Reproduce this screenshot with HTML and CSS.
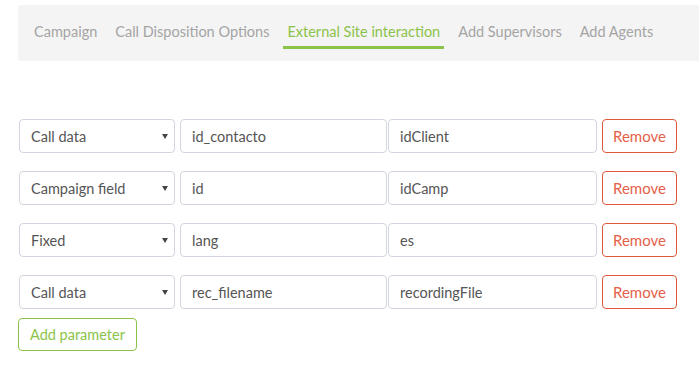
FILE: index.html
```html
<!DOCTYPE html>
<html lang="en">
<head>
    <meta charset="UTF-8">
    <meta name="viewport" content="width=device-width, initial-scale=1.0">
    <title>External Site interaction</title>
    <link rel="stylesheet" href="styles.css">
</head>
<body>
    <div class="page">
        <nav class="tabs">
            <a class="tab" href="#">Campaign</a>
            <a class="tab" href="#">Call Disposition Options</a>
            <a class="tab active" href="#">External Site interaction</a>
            <a class="tab" href="#">Add Supervisors</a>
            <a class="tab" href="#">Add Agents</a>
        </nav>

        <form class="params">
            <div class="param-row">
                <span class="select-wrap">
                    <select class="field select">
                        <option>Call data</option>
                        <option>Campaign field</option>
                        <option>Fixed</option>
                    </select>
                </span>
                <input class="field name" type="text" value="id_contacto">
                <input class="field value" type="text" value="idClient">
                <button type="button" class="btn-remove">Remove</button>
            </div>
            <div class="param-row">
                <span class="select-wrap">
                    <select class="field select">
                        <option>Call data</option>
                        <option selected>Campaign field</option>
                        <option>Fixed</option>
                    </select>
                </span>
                <input class="field name" type="text" value="id">
                <input class="field value" type="text" value="idCamp">
                <button type="button" class="btn-remove">Remove</button>
            </div>
            <div class="param-row">
                <span class="select-wrap">
                    <select class="field select">
                        <option>Call data</option>
                        <option>Campaign field</option>
                        <option selected>Fixed</option>
                    </select>
                </span>
                <input class="field name" type="text" value="lang">
                <input class="field value" type="text" value="es">
                <button type="button" class="btn-remove">Remove</button>
            </div>
            <div class="param-row">
                <span class="select-wrap">
                    <select class="field select">
                        <option selected>Call data</option>
                        <option>Campaign field</option>
                        <option>Fixed</option>
                    </select>
                </span>
                <input class="field name" type="text" value="rec_filename">
                <input class="field value" type="text" value="recordingFile">
                <button type="button" class="btn-remove">Remove</button>
            </div>
            <button type="button" class="btn-add">Add parameter</button>
        </form>
    </div>
</body>
</html>
```

FILE: styles.css
```css
* {
    margin: 0;
    padding: 0;
    box-sizing: border-box;
    font-family: 'Lato', 'Open Sans', sans-serif;
}

body {
    background-color: #fff;
    color: #555;
    overflow: hidden;
}

.page {
    padding: 5px 0 0 18px;
}

.tabs {
    display: flex;
    align-items: stretch;
    gap: 10px;
    height: 56px;
    padding-left: 12px;
    background-color: #f4f4f4;
    border-radius: 4px 0 0 4px;
}

.tab {
    display: flex;
    align-items: center;
    padding: 12px 4px 0;
    border-bottom: 3px solid transparent;
    margin-bottom: 12px;
    color: #a4a4a4;
    font-size: 14.5px;
    text-decoration: none;
}

.tab.active {
    color: #8bc34a;
    border-bottom-color: #8bc34a;
}

.params {
    margin-top: 58px;
}

.param-row {
    display: flex;
    align-items: center;
    height: 34px;
    margin-bottom: 18px;
}

.param-row:last-of-type {
    margin-bottom: 9px;
}

.field {
    height: 34px;
    padding: 0 11px;
    border: 1px solid #d2d6de;
    border-radius: 4px;
    background-color: #fff;
    color: #555;
    font-size: 14.5px;
    outline: none;
}

.select-wrap {
    position: relative;
    margin-left: 1px;
    margin-right: 5px;
}

.select-wrap::after {
    content: "";
    position: absolute;
    right: 7px;
    top: 15px;
    border-left: 3px solid transparent;
    border-right: 3px solid transparent;
    border-top: 5px solid #444;
    pointer-events: none;
}

.select {
    width: 156px;
    appearance: none;
    -webkit-appearance: none;
}

.name {
    width: 207px;
}

.value {
    width: 209px;
    margin-left: 1px;
}

.btn-remove {
    width: 75px;
    height: 34px;
    margin-left: 5px;
    border: 1px solid #e0583c;
    border-radius: 4px;
    background-color: #fff;
    color: #e3604a;
    font-size: 15px;
    cursor: pointer;
}

.btn-add {
    width: 119px;
    height: 33px;
    border: 1px solid #8bc34a;
    border-radius: 4px;
    background-color: #fff;
    color: #8bc34a;
    font-size: 14.5px;
    cursor: pointer;
}
```
